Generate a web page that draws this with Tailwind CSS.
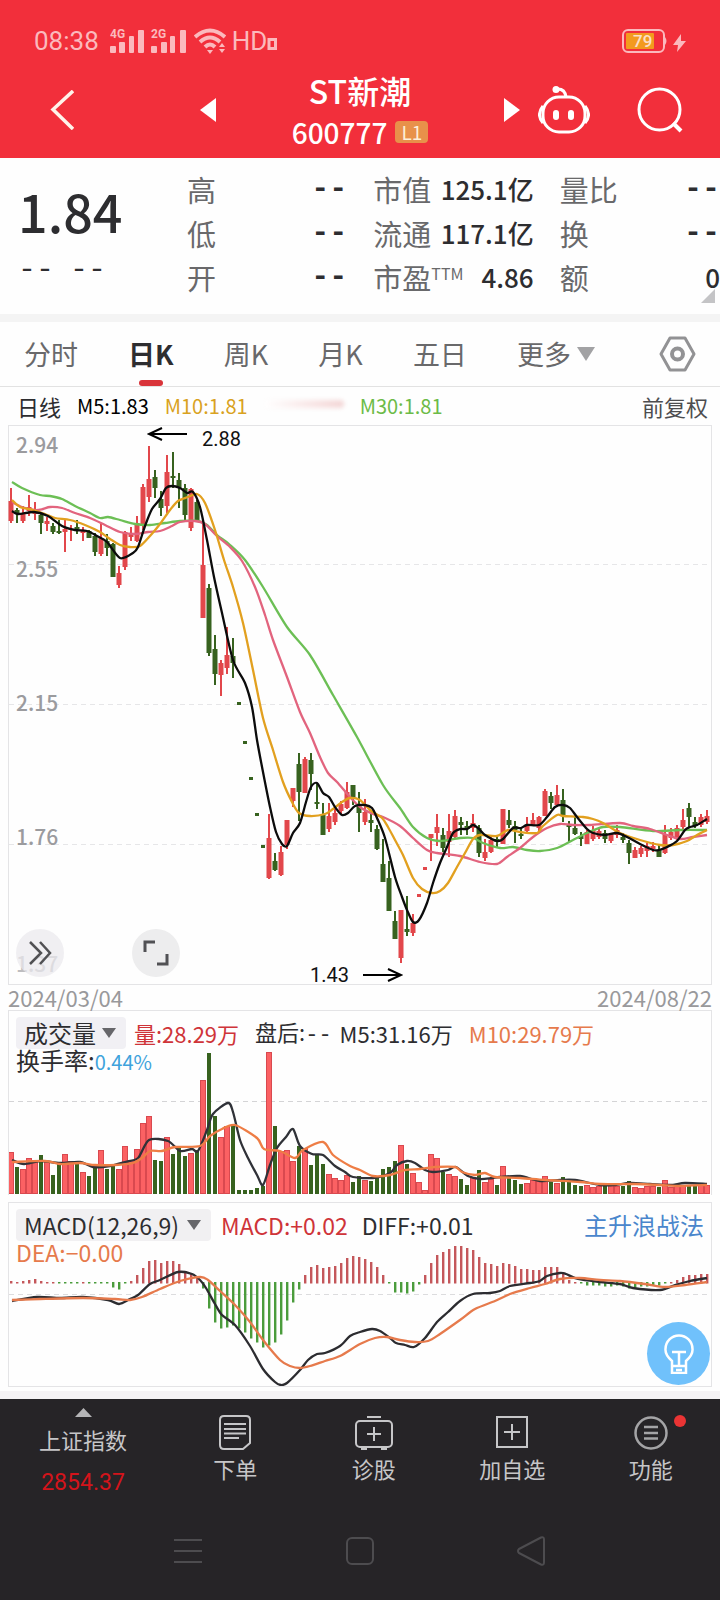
<!DOCTYPE html>
<html lang="zh-CN">
  <head>
    <meta charset="UTF-8" />
    <meta name="viewport" content="width=device-width, initial-scale=1.0" />
    <title>ST新潮 600777</title>
    <script src="https://cdn.jsdelivr.net/npm/@tailwindcss/browser@4"></script>
  </head>
  <body class="bg-[#fefefe] font-['Noto_Sans_CJK_SC',sans-serif] text-[#2d2d30]">
    <header class="bg-[#f22f3b] text-white">
      <!-- status bar -->
      <div class="flex h-[66px] items-center pt-4 pl-[34px] pr-[34px] text-[#fbb9bd]">
        <span class="font-['Roboto',sans-serif] text-[26px] leading-8">08:38</span>
        <svg class="ml-[11px] h-6 w-[76px]" viewBox="0 0 76 24" fill="currentColor" aria-hidden="true">
          <g font-family="Roboto, sans-serif" font-size="12" font-weight="700">
            <text x="0" y="9">4G</text>
            <text x="41" y="9">2G</text>
          </g>
          <rect x="0" y="17" width="6" height="7" rx="1" /><rect x="9" y="13" width="6" height="11" rx="1" />
          <rect x="19" y="7" width="5" height="17" rx="1" /><rect x="28" y="1" width="6" height="23" rx="1" />
          <rect x="41" y="17" width="6" height="7" rx="1" /><rect x="51" y="13" width="6" height="11" rx="1" />
          <rect x="60" y="7" width="5" height="17" rx="1" /><rect x="70" y="1" width="6" height="23" rx="1" />
        </svg>
        <svg class="ml-2 h-[26px] w-8" viewBox="0 0 32 26" fill="none" stroke="currentColor" stroke-width="4" aria-hidden="true">
          <path d="M1 9Q16-4 31 9" /><path d="M6 14Q16 5 26 14" /><path d="M11 19Q16 14 21 19" />
          <path d="M13 22h6l-3 4z" fill="currentColor" stroke="none" />
          <path d="M25 19l3-4 3 4zM25 21h6l-3 4z" fill="currentColor" stroke="none" />
        </svg>
        <span class="ml-1.5 font-['Roboto',sans-serif] text-[26px] leading-8">HD</span>
        <svg class="mt-1.5 h-3 w-2.5" viewBox="0 0 10 12" fill="none" stroke="currentColor" stroke-width="3" aria-hidden="true">
          <path d="M2 1.500h6.500v9H2z" />
        </svg>
        <svg class="ml-auto h-6 w-16" viewBox="0 0 64 24" aria-hidden="true">
          <rect x="1" y="1" width="41" height="22" rx="5" fill="none" stroke="#fbb9bd" stroke-width="2" />
          <rect x="4" y="4" width="28" height="16" rx="1" fill="#f39a1e" />
          <path d="M43 8q3 4 0 8z" fill="#fbb9bd" />
          <text x="11" y="18" font-family="Roboto, sans-serif" font-size="17" font-weight="500" fill="#fbe0c8">79</text>
          <path d="M59 5l-8 11h5l-1 7 9-11h-5z" fill="#fbb9bd" />
        </svg>
      </div>
      <!-- title bar -->
      <div class="grid h-[92px] grid-cols-[1fr_auto_1fr] items-center pb-1">
        <div class="pl-[50px]">
          <button type="button" class="block" aria-label="返回">
            <svg class="h-10 w-6" viewBox="0 0 24 40" fill="none" stroke="#fff3ea" stroke-width="3.500"><path d="M23 1L3 19.500 23 39" /></svg>
          </button>
        </div>
        <div class="flex w-80 items-center justify-between">
          <button type="button" aria-label="上一只">
            <svg class="h-6 w-4" viewBox="0 0 16 24" fill="#fff"><path d="M16 0v24L0 12z" /></svg>
          </button>
          <div class="text-center">
            <h1 class="text-[32px] leading-[43px] font-medium">ST新潮</h1>
            <p class="flex items-center justify-center gap-2 text-[28px] leading-10 font-medium">
              600777
              <span class="rounded-sm bg-[#e8914a] px-1.5 text-[19px] leading-[22px] font-normal text-[#fdeed8]">L1</span>
            </p>
          </div>
          <button type="button" aria-label="下一只">
            <svg class="h-6 w-4" viewBox="0 0 16 24" fill="#fff"><path d="M0 0v24l16-12z" /></svg>
          </button>
        </div>
        <div class="flex items-center justify-between pl-[18px] pr-[37px]">
          <button type="button" aria-label="智能助手">
            <svg class="h-12 w-[52px]" viewBox="0 0 52 48" fill="none" stroke="#fff" stroke-width="3">
              <path d="M18 3q9-1 10 8" /><circle cx="18" cy="3.500" r="3.500" fill="#fff" stroke="none" />
              <rect x="5" y="11" width="42" height="35" rx="16" />
              <path d="M5 20Q-2 29 5 37M47 20Q54 29 47 37" />
              <rect x="15" y="24" width="6" height="10" rx="3" fill="#fff" stroke="none" />
              <rect x="30" y="24" width="6" height="10" rx="3" fill="#fff" stroke="none" />
            </svg>
          </button>
          <button type="button" aria-label="搜索">
            <svg class="h-[46px] w-[46px]" viewBox="0 0 46 46" fill="none" stroke="#fff" stroke-width="3"><circle cx="22.500" cy="22.500" r="20.500" /><path d="M36 36l8 8" stroke-width="4" /></svg>
          </button>
        </div>
      </div>
    </header>

    <main>
      <section class="relative flex h-[156px] items-start pt-[9px]">
        <div class="w-[187px] shrink-0 pt-1.5 pl-[18px]">
          <p class="text-[52px] leading-[76px] font-medium">1.84</p>
          <p class="flex gap-4 pt-1 font-['Liberation_Mono',monospace] text-[30px] leading-[34px]"><span>--</span><span>--</span></p>
        </div>
        <dl class="grid flex-1 grid-cols-3 gap-x-[26px] text-[26px] leading-[44px]">
          <div class="flex justify-between"><dt class="text-[29px] text-[#69696b]">高</dt><dd class="font-['Liberation_Mono',monospace] text-[30px] font-bold">--</dd></div>
          <div class="flex justify-between"><dt class="text-[29px] text-[#69696b]">市值</dt><dd class="font-medium">125.1亿</dd></div>
          <div class="flex justify-between"><dt class="text-[29px] text-[#69696b]">量比</dt><dd class="font-['Liberation_Mono',monospace] text-[30px] font-bold">--</dd></div>
          <div class="flex justify-between"><dt class="text-[29px] text-[#69696b]">低</dt><dd class="font-['Liberation_Mono',monospace] text-[30px] font-bold">--</dd></div>
          <div class="flex justify-between"><dt class="text-[29px] text-[#69696b]">流通</dt><dd class="font-medium">117.1亿</dd></div>
          <div class="flex justify-between"><dt class="text-[29px] text-[#69696b]">换</dt><dd class="font-['Liberation_Mono',monospace] text-[30px] font-bold">--</dd></div>
          <div class="flex justify-between"><dt class="text-[29px] text-[#69696b]">开</dt><dd class="font-['Liberation_Mono',monospace] text-[30px] font-bold">--</dd></div>
          <div class="flex justify-between"><dt class="flex text-[29px] text-[#69696b]">市盈<span class="text-base leading-9">TTM</span></dt><dd class="font-medium">4.86</dd></div>
          <div class="flex justify-between"><dt class="text-[29px] text-[#69696b]">额</dt><dd class="font-medium">0</dd></div>
        </dl>
        <svg class="absolute right-[5px] bottom-[11px] h-3.5 w-3.5" viewBox="0 0 14 14" fill="#c4c4c6" aria-hidden="true"><path d="M14 0v14H0z" /></svg>
      </section>
      <div class="h-2 bg-[#f4f4f4]"></div>

      <div class="flex h-[65px] items-center border-b border-[#e2e2e2] pr-6 pl-6 text-[27px] leading-10 text-[#69696b]">
        <nav class="flex flex-1 items-center justify-between">
          <a href="#">分时</a>
          <a href="#" class="relative font-bold text-[#2d2d30]">日K<span class="absolute -bottom-3 left-1/2 h-1.5 w-6 -translate-x-1/2 rounded-full bg-[#d9343a]"></span></a>
          <a href="#">周K</a>
          <a href="#">月K</a>
          <a href="#">五日</a>
          <button type="button" class="flex items-center gap-1.5">更多
            <svg class="h-3.5 w-[18px]" viewBox="0 0 18 14" fill="#a2a2a4"><path d="M0 0h18L9 14z" /></svg>
          </button>
        </nav>
        <button type="button" class="ml-16" aria-label="设置">
          <svg class="h-9 w-[37px]" viewBox="0 0 37 36" fill="none" stroke="#929294" stroke-width="3" stroke-linejoin="round"><path d="M11 2h15l9 16-9 16H11L2 18z" /><circle cx="18.500" cy="18" r="5.500" stroke-width="4" /></svg>
        </button>
      </div>

      <div class="flex h-[38px] items-center gap-4 pr-3 pl-[17px] text-xl leading-8">
        <span class="text-[22px]">日线</span>
        <span class="text-black">M5:1.83</span>
        <span class="text-[#d9a21f]">M10:1.81</span>
        <span class="mb-1 h-2 w-20 rounded-full bg-linear-to-r from-white to-[#f3d6d6] blur-[2px]"></span>
        <span class="text-[#6cbb48]">M30:1.81</span>
        <span class="ml-auto text-[22px] text-[#4d4d50]">前复权</span>
      </div>

      <!-- candles -->
      <section class="relative mx-2 border border-[#e4e4e6]">
        <svg id="kline" class="block w-full overflow-visible" viewBox="9 426 702 558" role="img" aria-label="日K线"></svg>
        <button type="button" class="absolute bottom-[7px] left-[7px] flex size-12 items-center justify-center rounded-full bg-[#e9e8ec]/70" aria-label="展开">
          <svg class="size-6" viewBox="0 0 24 24" fill="none" stroke="#515154" stroke-width="2.500"><path d="M2 1l11 11L2 23M12 1l10 11-10 11" /></svg>
        </button>
        <button type="button" class="absolute bottom-[7px] left-[123px] flex size-12 items-center justify-center rounded-full bg-[#ededee]" aria-label="全屏">
          <svg class="size-[26px]" viewBox="0 0 26 26" fill="none" stroke="#515154" stroke-width="3"><path d="M2 12V2h10M24 14v10H14" /></svg>
        </button>
      </section>
      <div class="mx-2 flex justify-between text-[22px] leading-[25px] text-[#99999b]">
        <time datetime="2024-03-04">2024/03/04</time>
        <time datetime="2024-08-22">2024/08/22</time>
      </div>

      <!-- volume -->
      <section class="mx-2 grid border border-b-0 border-[#e4e4e6]">
        <svg id="volume" class="col-start-1 row-start-1 block w-full" viewBox="9 1011 702 184" role="img" aria-label="成交量"></svg>
        <div class="col-start-1 row-start-1 px-[7px] pt-1.5 text-[22px] leading-[26px]">
          <div class="flex items-center whitespace-nowrap">
            <button type="button" class="flex h-8 w-[110px] items-center justify-between rounded-sm bg-[#f1f0f4] pr-2.5 pl-2 text-2xl leading-7">成交量
              <svg class="h-2.5 w-3.5" viewBox="0 0 14 10" fill="#66666a"><path d="M0 0h14L7 10z" /></svg>
            </button>
            <span class="ml-2 text-[#cf3439]">量:28.29万</span>
            <span class="ml-4">盘后:<span class="font-['Liberation_Mono',monospace]">--</span></span>
            <span class="ml-2">M5:31.16万</span>
            <span class="ml-4 text-[#e67a4c]">M10:29.79万</span>
          </div>
          <p class="-mt-0.5"><span class="text-2xl leading-[26px]">换手率:</span><span class="text-xl leading-[26px] text-[#3ea3dc]">0.44%</span></p>
        </div>
      </section>

      <!-- macd -->
      <section class="relative mx-2 mt-[7px] grid border border-[#e4e4e6]">
        <svg id="macd" class="col-start-1 row-start-1 block w-full" viewBox="9 1203 702 183" role="img" aria-label="MACD"></svg>
        <div class="col-start-1 row-start-1 px-[7px] pt-1.5 text-[23px] leading-[26px]">
          <div class="flex items-center whitespace-nowrap">
            <button type="button" class="flex h-8 w-[195px] items-center justify-between rounded-sm bg-[#f1f0f2] pr-2.5 pl-2">MACD(12,26,9)
              <svg class="h-2.5 w-3.5" viewBox="0 0 14 10" fill="#66666a"><path d="M0 0h14L7 10z" /></svg>
            </button>
            <span class="ml-2.5 text-[#cf3439]">MACD:+0.02</span>
            <span class="ml-3.5">DIFF:+0.01</span>
            <a href="#" class="ml-auto text-2xl leading-8 text-[#4a86cc]">主升浪战法</a>
          </div>
          <p class="-mt-0.5 text-[#e67a4c]">DEA:−0.00</p>
        </div>
        <button type="button" class="absolute right-px bottom-px flex size-[63px] items-center justify-center rounded-full bg-[#70c1fb]" aria-label="提示">
          <svg class="h-10 w-[30px]" viewBox="0 0 30 40" fill="none" stroke="#fff" stroke-width="2.500"><path d="M8 32v-5Q1 21 1.500 15a13.500 13.500 0 0 1 27 0Q29 21 22 27v12H8v-7h14M8 18h14M15 18v14M12 36h6" /></svg>
        </button>
      </section>
      <div class="mt-1 h-2 bg-[#f5f3f5]"></div>
    </main>

    <footer class="bg-[#262427] text-[22px] leading-8 text-[#c6c6c8]">
      <nav class="grid h-[101px] grid-cols-[166px_1fr_1fr_1fr_1fr] text-center">
        <a href="#" class="flex flex-col items-center pt-[9px]">
          <svg class="h-[9px] w-[17px]" viewBox="0 0 17 9" fill="#b5b5b7"><path d="M0 9L8.500 0 17 9z" /></svg>
          <span class="mt-1.5">上证指数</span>
          <span class="mt-3 font-['Roboto',sans-serif] text-[23px] text-[#d3141b]">2854.37</span>
        </a>
        <a href="#" class="flex flex-col items-center gap-0.5 pt-4">
          <svg class="h-[35px] w-8" viewBox="0 0 32 35" fill="none" stroke="currentColor" stroke-width="2"><path d="M5 1h22q4 0 4 4v23l-7 6H5q-4 0-4-4V5q0-4 4-4zM5 9h22M5 14h22M5 18.500h22M5 23h15" /></svg>
          下单
        </a>
        <a href="#" class="flex flex-col items-center gap-0.5 pt-4">
          <svg class="h-[35px] w-[38px]" viewBox="0 0 38 35" fill="none" stroke="currentColor" stroke-width="2"><path d="M12 2h14" /><rect x="1" y="6" width="36" height="26" rx="4" /><path d="M19 12v14M12 19h14M6 34h6M26 34h6" /></svg>
          诊股
        </a>
        <a href="#" class="flex flex-col items-center gap-0.5 pt-4">
          <svg class="h-[35px] w-8" viewBox="0 0 32 35" fill="none" stroke="currentColor" stroke-width="2"><path d="M1 2h30v30H1zM16 9v16M8 17h16" /></svg>
          加自选
        </a>
        <a href="#" class="flex flex-col items-center gap-0.5 pt-4">
          <span class="relative">
            <svg class="block h-[35px] w-[34px]" viewBox="0 0 34 35" fill="none" stroke="#a4a4a6" stroke-width="2.500"><circle cx="17" cy="18" r="15.500" /><path d="M10 12h14M10 18h14M10 23.500h14" /></svg>
            <span class="absolute top-0 -right-[18px] size-3 rounded-full bg-[#ea3434]"></span>
          </span>
          功能
        </a>
      </nav>
      <div class="flex h-[101px] items-center justify-between pr-[175px] pl-[174px] text-[#4d4c4f]">
        <button type="button" aria-label="任务"><svg class="size-7" viewBox="0 0 28 28" fill="none" stroke="currentColor" stroke-width="2"><path d="M0 3h28M0 14h28M0 25h28" /></svg></button>
        <button type="button" aria-label="主屏幕"><svg class="size-7" viewBox="0 0 28 28" fill="none" stroke="currentColor" stroke-width="2"><rect x="1" y="1" width="26" height="26" rx="5" /></svg></button>
        <button type="button" aria-label="后退"><svg class="h-[30px] w-7" viewBox="0 0 28 30" fill="none" stroke="currentColor" stroke-width="2" stroke-linejoin="round"><path d="M2 13L24 1.500q3-1 3 2v23q0 3-3 2L2 17q-2-2 0-4z" /></svg></button>
      </div>
    </footer>

    <script>
      const RED = '#e2474b'
      const GREEN = '#37621f'
      const STEP = 6
      const X0 = 11

      // direction, high, low, body top, body bottom
      const candles = `r 488 523 501 521,g 508 523 510 514,r 506 523 513 521,r 495 516 507 511,r 502 520 510 514,g 513 534 515 523,r 517 531 521 524,g 523 534 526 532,g 520 534 531 533,r 519 552 529 532,r 525 541 529 530,g 520 534 527 529,r 527 541 530 533,g 530 538 531 538,g 533 556 536 552,r 523 556 538 554,g 534 556 541 548,g 543 577 544 577,r 566 588 573 585,r 531 570 532 567,r 527 541 534 537,r 516 542 523 541,r 484 530 487 526,r 446 502 479 497,g 470 498 477 488,g 491 516 499 508,r 455 513 472 506,g 452 488 476 478,g 473 508 480 488,g 484 520 488 515,r 488 531 489 528,g 500 522 502 522,r 520 618 565 618,g 584 656 588 653,g 635 685 649 674,r 660 696 663 675,r 627 674 655 668,g 638 678 656 663,g 702 705 702 705,g 741 744 741 744,g 777 780 777 780,g 813 816 813 816,g 845 848 845 848,r 814 879 838 878,g 853 871 861 870,r 846 876 852 875,r 820 849 820 845,r 788 807 788 801,g 753 821 764 792,r 757 793 759 793,g 753 790 760 774,g 784 809 802 804,g 803 835 815 835,r 803 832 816 829,r 807 825 813 822,r 801 814 804 811,r 782 809 792 808,g 785 805 785 799,g 792 832 804 813,r 799 825 812 822,g 813 832 820 823,g 825 850 829 849,g 839 882 864 882,g 861 911 878 911,g 911 939 921 939,r 910 963 910 958,g 896 936 929 932,r 914 936 923 933,r 894 897 894 897,r 867 870 867 870,r 834 861 834 838,r 814 846 827 833,g 828 852 835 848,r 814 857 831 842,r 810 839 816 837,g 817 835 822 825,g 821 835 826 829,r 814 832 823 828,g 825 857 828 853,r 839 861 852 858,r 837 853 840 852,g 836 847 839 842,r 809 844 809 844,g 810 828 820 825,g 821 843 826 830,g 827 839 834 836,r 817 833 825 831,r 813 826 820 825,r 816 833 817 828,r 789 816 791 816,g 792 809 796 803,r 785 807 795 805,g 789 822 800 815,g 821 843 825 827,g 817 835 828 834,g 832 846 836 839,r 830 844 832 844,r 826 841 830 839,r 828 839 831 837,g 830 843 833 839,r 833 843 834 841,r 825 838 830 835,g 833 843 837 840,g 840 864 843 853,r 847 858 850 858,r 846 857 848 854,r 843 857 846 851,r 842 852 846 849,g 845 857 850 857,r 825 854 834 853,r 828 840 832 838,r 825 840 828 839,r 809 831 820 827,g 803 828 808 817,g 817 828 822 826,r 814 827 817 825,r 810 824 816 822`
        .split(',').map((row) => row.split(' '))

      const volumes = [42,27,25,36,32,39,33,19,32,40,33,30,22,18,28,44,25,28,25,48,34,45,71,78,34,33,57,40,47,38,41,44,114,141,78,57,68,68,4,4,4,6,8,142,68,43,44,33,48,46,29,40,30,20,16,14,19,12,18,14,13,17,25,27,33,49,30,21,12,4,40,36,22,20,18,15,9,17,24,12,15,9,28,16,14,10,11,14,13,18,12,11,17,14,9,8,9,7,8,8,9,8,8,13,7,6,8,8,7,14,7,8,9,8,8,9,9]
      const macd = [2,1,2,3,4,2,1,1,-1,-1,-1,-1,1,-1,-1,-1,-1,-5,-7,-1,2,8,15,22,23,20,22,22,19,12,10,5,-6,-26,-40,-46,-45,-43,-46,-50,-56,-60,-65,-63,-60,-52,-38,-20,-7,8,16,18,15,16,17,20,25,27,26,24,21,16,8,-1,-10,-10,-11,-9,-2,8,20,28,31,34,37,37,35,33,26,20,19,17,20,19,17,14,14,13,13,16,16,16,11,3,1,-1,-3,-3,-3,-4,-4,-3,-4,-6,-5,-4,-4,-3,-3,-1,1,3,6,8,8,9,9]

      const ma5 = '12,511 18,514 34,512 48,516 62,526 75,530 87,531 97,536 107,542 120,558 133,553 138,547 145,526 152,509 160,499 166,488 172,486 180,488 187,493 193,492 200,507 207,540 214,577 222,613 233,660 245,683 252,707 257,740 263,772 270,807 276,832 282,844 287,846 293,833 300,823 306,802 311,787 317,783 323,793 329,797 335,807 342,815 348,813 355,806 365,805 372,808 377,818 385,838 395,877 402,897 407,910 413,922 419,920 427,903 433,883 440,863 447,847 453,833 460,829 467,829 473,825 479,829 485,835 497,841 503,839 513,828 521,828 527,825 539,825 547,817 555,807 563,805 570,808 577,817 587,829 593,833 605,835 617,833 627,837 640,844 653,850 659,850 667,847 677,841 685,830 690,827 697,825 707,819'
      const ma10 = '12,500 20,507 33,510 45,514 55,518 70,520 85,525 100,532 110,539 120,545 130,547 140,546 150,536 160,524 170,510 178,501 188,497 197,494 205,503 215,530 224,560 233,587 243,623 253,670 263,718 273,750 283,782 292,802 299,813 310,816 325,814 333,809 342,802 350,798 360,800 370,810 382,818 388,827 395,840 403,855 413,878 422,889 432,893 440,891 448,883 457,867 465,853 473,839 480,835 497,836 508,830 520,832 537,833 543,826 557,815 563,816 583,817 593,819 603,823 620,833 640,840 660,845 673,845 687,841 697,835 707,830'
      const ma20 = '12,502 22,507 35,510 43,509 50,507 62,508 75,513 90,518 105,525 120,532 135,534 148,532 160,531 172,526 180,522 195,521 205,524 217,536 230,547 242,561 255,587 265,615 273,640 287,677 300,712 310,733 320,757 328,773 337,782 350,797 360,807 373,814 383,817 400,826 413,838 427,850 437,853 460,856 480,862 497,864 507,857 520,848 533,837 547,828 560,824 573,825 590,825 620,823 633,826 650,829 667,835 680,839 693,837 707,835'
      const ma30 = '12,482 22,488 40,495 50,496 62,499 75,506 90,513 100,518 108,517 120,520 135,524 150,525 165,523 180,521 198,521 207,525 217,535 230,545 245,560 263,587 287,627 310,655 333,695 357,737 383,785 400,808 413,827 427,838 440,841 460,838 473,838 483,843 500,848 513,847 527,850 540,851 557,848 573,840 587,833 603,827 620,827 653,831 680,830 707,830'
      const vol5 = '12,1160 24,1164 40,1161 60,1163 80,1162 93,1167 110,1166 125,1162 138,1158 149,1140 168,1141 180,1151 192,1149 198,1151 207,1130 213,1114 228,1103 233,1112 240,1140 248,1158 257,1175 263,1185 270,1165 277,1148 286,1137 293,1129 300,1146 312,1154 323,1155 335,1166 345,1172 353,1177 373,1178 390,1173 397,1165 407,1161 415,1163 425,1170 433,1172 448,1170 456,1167 468,1176 480,1179 492,1178 500,1177 520,1176 540,1181 560,1180 575,1180 600,1185 615,1185 630,1183 650,1184 670,1185 685,1183 707,1184'
      const vol10 = '12,1162 45,1161 60,1164 80,1163 95,1165 115,1165 133,1163 142,1158 150,1151 162,1151 175,1147 200,1146 210,1136 222,1129 235,1125 257,1138 264,1149 280,1151 295,1158 303,1150 323,1142 333,1155 350,1166 360,1170 373,1176 390,1175 405,1170 420,1169 435,1167 455,1167 462,1172 475,1175 485,1173 495,1177 520,1178 545,1180 580,1182 600,1184 635,1184 660,1185 680,1186 707,1185'
      const diff = '12,1301 37,1297 60,1298 83,1297 108,1300 119,1304 130,1299 138,1295 150,1284 160,1280 178,1272 192,1274 200,1280 206,1288 215,1304 222,1315 235,1325 250,1346 263,1369 275,1382 281,1385 287,1383 300,1370 308,1360 317,1354 325,1353 340,1346 350,1336 360,1332 372,1329 380,1331 390,1338 396,1343 405,1345 414,1347 425,1338 437,1322 448,1312 460,1301 473,1294 490,1293 500,1291 510,1286 530,1283 540,1281 547,1276 560,1273 566,1274 578,1279 600,1282 620,1284 633,1288 660,1290 675,1285 690,1281 707,1278'
      const dea = '12,1300 40,1299 83,1298 115,1299 130,1300 142,1297 160,1289 180,1281 200,1277 208,1280 220,1291 235,1305 250,1322 263,1340 280,1360 290,1366 300,1368 310,1366 325,1361 340,1356 360,1344 375,1338 387,1337 400,1340 415,1342 428,1341 440,1334 460,1320 475,1309 495,1301 510,1294 530,1288 545,1284 560,1279 580,1278 600,1280 620,1281 645,1284 665,1287 685,1285 707,1282'

      // smooth curve through the points
      function curve(points, color) {
        const p = points.split(' ').map((s) => s.split(',').map(Number))
        let d = `M${p[0]}`
        for (let i = 0; i < p.length - 1; i++) {
          const a = p[i - 1] || p[i], b = p[i], c = p[i + 1], e = p[i + 2] || c
          d += `C${b[0] + (c[0] - a[0]) / 7} ${b[1] + (c[1] - a[1]) / 7} ${c[0] - (e[0] - b[0]) / 7} ${c[1] - (e[1] - b[1]) / 7} ${c}`
        }
        return `<path d="${d}" fill="none" stroke="${color}" stroke-width="2.3" stroke-linejoin="round"/>`
      }

      function rect(x, y, w, h, fill) {
        return `<rect x="${x}" y="${y}" width="${w}" height="${h}" fill="${fill}"/>`
      }

      function dashed(y, color) {
        return `<path d="M9 ${y}.5H711" stroke="${color}" stroke-dasharray="5 4"/>`
      }

      let k = dashed(564, '#e6e6e8') + dashed(704, '#e6e6e8') + dashed(844, '#e6e6e8')
      ;[[2.94, 453], [2.55, 577], [2.15, 711], [1.76, 845], [1.37, 972]].forEach(([v, y]) => {
        k += `<text x="16" y="${y}" font-size="21" font-weight="500" fill="${v === 1.37 ? '#bdbdc0' : '#9b9b9e'}">${v}</text>`
      })
      candles.forEach(([dir, high, low, top, bottom], i) => {
        const x = X0 + i * STEP
        const color = dir === 'r' ? RED : GREEN
        const w = high === top && low === bottom && low - high === 3 ? 4 : 5
        k += rect(x - 1, high, 2, low - high, color) + rect(x - w / 2, top, w, bottom - top, color)
      })
      k += curve(ma30, '#6cbf55') + curve(ma20, '#e2647e') + curve(ma10, '#e2a01f') + curve(ma5, '#0c0c0c')
      k += `<g font-family="Roboto, sans-serif" font-size="20" fill="#111"><text x="202" y="446">2.88</text><text x="310" y="982">1.43</text></g>
        <path d="M187 434H150M162 428l-13 6 13 6M363 975h36M388 969l13 6-13 6" fill="none" stroke="#000" stroke-width="2"/>`
      document.getElementById('kline').innerHTML = k

      let v = dashed(1101, '#d4d4d6')
      volumes.forEach((h, i) => {
        const x = X0 + i * STEP
        v += candles[i][0] === 'r'
          ? `<rect x="${x - 2.5}" y="${1194.5 - h}" width="5" height="${h - 1}" fill="#fb6163" stroke="#d9494f"/>`
          : rect(x - 2, 1194 - h, 4, h, GREEN)
      })
      v += curve(vol5, '#303238') + curve(vol10, '#ee7d45')
      document.getElementById('volume').innerHTML = v

      let m = dashed(1294, '#dcdcde')
      macd.forEach((h, i) => {
        m += rect(X0 + i * STEP - 1, h > 0 ? 1283 - h : 1282, 2.4, Math.abs(h) + 0.5, h > 0 ? '#c4575b' : '#4b9c3c')
      })
      m += curve(diff, '#2c2c30') + curve(dea, '#e67a4c')
      document.getElementById('macd').innerHTML = m
    </script>
  </body>
</html>
